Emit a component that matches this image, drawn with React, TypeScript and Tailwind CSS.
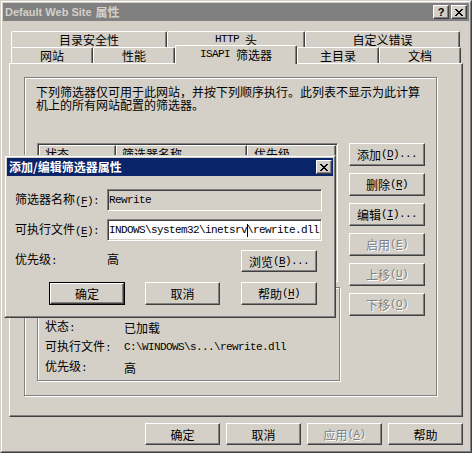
import React from 'react';

const cjk = "font-['Noto_Sans_CJK_SC',sans-serif]";
const mono = "font-['Liberation_Mono','Noto_Sans_CJK_SC',monospace] text-[11px] tracking-[-0.6px]";
const raised =
  'border border-t-white border-l-white border-r-[#404040] border-b-[#404040] shadow-[inset_-1px_-1px_0_#808080]';
const sunken =
  'border border-t-[#808080] border-l-[#808080] border-r-white border-b-white shadow-[inset_1px_1px_0_#404040,inset_-1px_-1px_0_#d4d0c8]';
const etched = 'border border-[#808080] shadow-[1px_1px_0_#fff,inset_1px_1px_0_#fff]';

type Kids = { className?: string; children?: React.ReactNode };

function Acc({ k, dots, colon }: { k: string; dots?: boolean; colon?: boolean }) {
  return (
    <span className={mono}>
      (<u className="underline-offset-2">{k}</u>){dots ? '...' : ''}
      {colon ? ':' : ''}
    </span>
  );
}

function Btn({ className = '', disabled, children }: Kids & { disabled?: boolean }) {
  return (
    <div
      className={`${raised} ${className} flex items-center justify-center bg-[#d4d0c8] leading-[13px] whitespace-nowrap ${
        disabled ? 'text-[#808080] [text-shadow:1px_1px_0_#fff]' : 'text-black'
      }`}
    >
      {children}
    </div>
  );
}

function CloseGlyph() {
  return (
    <svg width="8" height="7" viewBox="0 0 8 7" shapeRendering="crispEdges">
      <path
        fill="#000"
        d="M0 0h2v1H0zM6 0h2v1H6zM1 1h2v1H1zM5 1h2v1H5zM2 2h4v1H2zM3 3h2v1H3zM2 4h4v1H2zM1 5h2v1H1zM5 5h2v1H5zM0 6h2v1H0zM6 6h2v1H6z"
      />
    </svg>
  );
}

function CapBtn({ children }: Kids) {
  return (
    <div className={`${raised} w-[16px] h-[14px] bg-[#d4d0c8] flex items-center justify-center`}>{children}</div>
  );
}

function Tab({ className = '', children }: Kids) {
  return (
    <div
      className={`${className} flex items-center justify-center bg-[#d4d0c8] border-t border-l border-r border-t-white border-l-white border-r-[#404040] rounded-t-[2px] shadow-[inset_-1px_0_0_#808080] leading-[13px] whitespace-nowrap`}
    >
      {children}
    </div>
  );
}

export default function App() {
  return (
    <div
      className={`relative w-[472px] h-[453px] bg-[#d4d0c8] text-black text-[12px] ${cjk} border border-t-[#d4d0c8] border-l-[#d4d0c8] border-r-[#404040] border-b-[#404040] overflow-hidden`}
    >
      <div className="h-full flex flex-col border border-t-white border-l-white border-r-[#808080] border-b-[#808080] p-px">
        {/* title bar (inactive) */}
        <div className="h-[18px] shrink-0 bg-[#808080] flex items-center px-[2px]">
          <span className="font-['Liberation_Sans',sans-serif] text-[11px] font-bold text-[#d4d0c8] leading-none">
            Default Web Site
          </span>
          <span className="text-[12px] font-bold text-[#d4d0c8] ml-[4px] leading-none">属性</span>
          <div className="ml-auto flex gap-[2px]">
            <CapBtn>
              <span className="font-['Liberation_Sans',sans-serif] text-[11px] font-bold leading-none">?</span>
            </CapBtn>
            <CapBtn>
              <CloseGlyph />
            </CapBtn>
          </div>
        </div>

        <div className="flex-1 flex flex-col px-[6px] pt-[10px]">
          {/* tabs */}
          <div className="flex h-[16px] pl-[2px]">
            <Tab className="w-[156px] h-[16px]">目录安全性</Tab>
            <Tab className="w-[138px] h-[16px]">
              <span className={mono}>HTTP</span>
              <span className="ml-[6px]">头</span>
            </Tab>
            <Tab className="w-[155px] h-[16px]">自定义错误</Tab>
          </div>
          <div className="flex h-[16px] pl-[2px] items-start">
            <Tab className="w-[82px] h-[16px]">网站</Tab>
            <Tab className="w-[82px] h-[16px]">性能</Tab>
            <Tab className="relative z-10 w-[122px] h-[19px] -mt-[2px] pb-[2px]">
              <span className={mono}>ISAPI</span>
              <span className="ml-[6px]">筛选器</span>
            </Tab>
            <Tab className="w-[82px] h-[16px]">主目录</Tab>
            <Tab className="w-[82px] h-[16px]">文档</Tab>
          </div>

          {/* tab panel */}
          <div className="h-[354px] border border-t-white border-l-white border-r-[#404040] border-b-[#404040] shadow-[inset_-1px_-1px_0_#808080] pt-[13px] pl-[14px]">
            <div className={`${etched} w-[413px] h-[319px] pt-[7px] pl-[11px]`}>
              <p className="leading-[13px] whitespace-nowrap">
                下列筛选器仅可用于此网站，并按下列顺序执行。此列表不显示为此计算
                <br />
                机上的所有网站配置的筛选器。
              </p>

              <div className="flex mt-[32px] ml-px gap-[9px]">
                <div className="w-[303px] flex flex-col">
                  {/* filter list (mostly covered by the dialog) */}
                  <div className={`${sunken} w-[301px] h-[139px] bg-white p-px`}>
                    <div className="flex h-[17px] leading-[13px]">
                      <div className={`${raised} w-[77px] bg-[#d4d0c8] pl-[5px] flex items-center`}>状态</div>
                      <div className={`${raised} w-[131px] bg-[#d4d0c8] pl-[5px] flex items-center`}>筛选器名称</div>
                      <div className={`${raised} w-[89px] bg-[#d4d0c8] pl-[6px] flex items-center`}>优先级</div>
                    </div>
                  </div>

                  {/* details */}
                  <div className={`${etched} mt-[5px] h-[94px] pt-[29px] pl-[7px] leading-[13px]`}>
                    <div className="flex items-center h-[20px]">
                      <div className="w-[79px]">
                        状态<span className={mono}>:</span>
                      </div>
                      <span>已加载</span>
                    </div>
                    <div className="flex items-center h-[20px]">
                      <div className="w-[79px]">
                        可执行文件<span className={mono}>:</span>
                      </div>
                      <span className={mono}>{'C:\\WINDOWS\\s...\\rewrite.dll'}</span>
                    </div>
                    <div className="flex items-center h-[20px]">
                      <div className="w-[79px]">
                        优先级<span className={mono}>:</span>
                      </div>
                      <span>高</span>
                    </div>
                  </div>
                </div>

                <div className="flex flex-col gap-[7px]">
                  <Btn className="w-[76px] h-[23px]">
                    添加<Acc k="D" dots />
                  </Btn>
                  <Btn className="w-[76px] h-[23px]">
                    删除<Acc k="R" />
                  </Btn>
                  <Btn className="w-[76px] h-[23px]">
                    编辑<Acc k="I" dots />
                  </Btn>
                  <Btn className="w-[76px] h-[23px]" disabled>
                    启用<Acc k="E" />
                  </Btn>
                  <Btn className="w-[76px] h-[23px]" disabled>
                    上移<Acc k="U" />
                  </Btn>
                  <Btn className="w-[76px] h-[23px]" disabled>
                    下移<Acc k="O" />
                  </Btn>
                </div>
              </div>
            </div>
          </div>

          {/* dialog buttons */}
          <div className="flex justify-end gap-[6px] mt-[6px]">
            <Btn className="w-[75px] h-[22px]">确定</Btn>
            <Btn className="w-[75px] h-[22px]">取消</Btn>
            <Btn className="w-[75px] h-[22px]" disabled>
              应用<Acc k="A" />
            </Btn>
            <Btn className="w-[75px] h-[22px]">帮助</Btn>
          </div>
        </div>
      </div>

      {/* Add/Edit filter properties dialog */}
      <div className="absolute left-[3px] top-[154px] z-20 w-[332px] h-[163px] bg-[#d4d0c8] border border-t-[#d4d0c8] border-l-[#d4d0c8] border-r-[#404040] border-b-[#404040]">
        <div className="h-full flex flex-col border border-t-white border-l-white border-r-[#808080] border-b-[#808080] p-px">
          <div className="h-[18px] shrink-0 bg-[#0a246a] flex items-center pl-[2px] pr-px">
            <span className="text-[12px] font-bold text-white leading-none">添加/编辑筛选器属性</span>
            <div className="ml-auto">
              <CapBtn>
                <CloseGlyph />
              </CapBtn>
            </div>
          </div>

          <div className="pl-[8px] pt-[13px] leading-[13px]">
            <div className="flex items-center h-[22px]">
              <div className="w-[92px] whitespace-nowrap">
                筛选器名称<Acc k="F" colon />
              </div>
              <div className={`${sunken} w-[215px] h-[22px] bg-[#d4d0c8] flex items-center pl-px`}>
                <span className={mono}>Rewrite</span>
              </div>
            </div>

            <div className="flex items-center h-[22px] mt-[8px]">
              <div className="w-[92px] whitespace-nowrap">
                可执行文件<Acc k="E" colon />
              </div>
              <div className={`${sunken} w-[215px] h-[22px] bg-white flex items-center pl-px overflow-hidden whitespace-nowrap`}>
                <span className={mono}>{'INDOWS\\system32\\inetsrv'}</span>
                <span className="inline-block w-px h-[13px] bg-black -mr-px" />
                <span className={mono}>{'\\rewrite.dll'}</span>
              </div>
            </div>

            <div className="flex items-start h-[22px] mt-[9px]">
              <div className="w-[92px] mt-[2px]">
                优先级<span className={mono}>:</span>
              </div>
              <div className="w-[134px] mt-[2px]">高</div>
              <Btn className="w-[76px] h-[22px]">
                浏览<Acc k="B" dots />
              </Btn>
            </div>

            <div className="flex h-[23px] mt-[10px]">
              <div className="ml-[34px] w-[76px] h-[23px] border border-black">
                <Btn className="w-full h-full">确定</Btn>
              </div>
              <Btn className="ml-[20px] w-[75px] h-[23px]">取消</Btn>
              <Btn className="ml-[21px] w-[76px] h-[23px]">
                帮助<Acc k="H" />
              </Btn>
            </div>
          </div>
        </div>
      </div>
    </div>
  );
}
